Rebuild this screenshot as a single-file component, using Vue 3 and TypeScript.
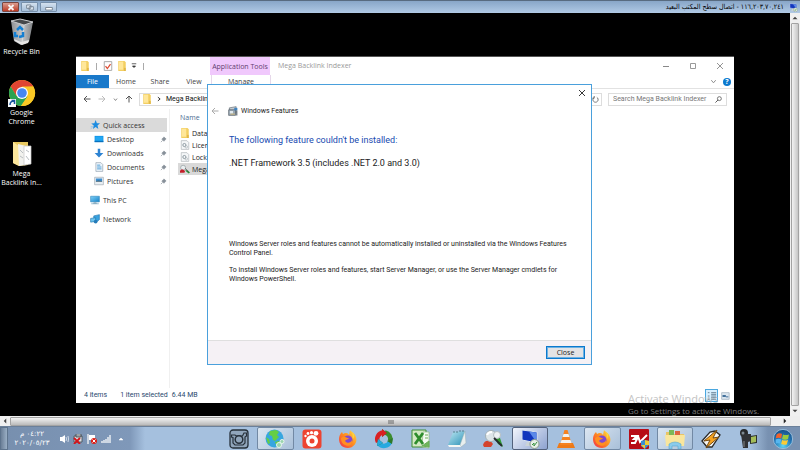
<script setup lang="ts">
interface NavItem { label: string; icon: string }

const places: NavItem[] = [
  { label: 'Desktop', icon: 'i-desktop' },
  { label: 'Downloads', icon: 'i-down' },
  { label: 'Documents', icon: 'i-doc' },
  { label: 'Pictures', icon: 'i-pic' },
]
const files: NavItem[] = [
  { label: 'Data', icon: 'i-folder' },
  { label: 'Licen', icon: 'i-config' },
  { label: 'Lock', icon: 'i-config' },
  { label: 'Mega', icon: 'i-app' },
]
const apps: { label: string; icon: string; state?: string }[] = [
  { label: 'Camera', icon: 't-camera' },
  { label: 'Downloader', icon: 't-globe', state: 'open' },
  { label: 'Player', icon: 't-gom' },
  { label: 'Firefox', icon: 't-firefox' },
  { label: 'Sync', icon: 't-swirl' },
  { label: 'Excel', icon: 't-excel' },
  { label: 'Notes', icon: 't-notes' },
  { label: 'Indexer', icon: 't-indexer' },
  { label: 'Remote Desktop', icon: 't-rdp', state: 'active' },
  { label: 'VLC', icon: 't-vlc' },
  { label: 'Firefox window', icon: 't-firefox', state: 'open' },
  { label: 'Video tool', icon: 't-ev' },
  { label: 'Explorer', icon: 't-explorer', state: 'open' },
  { label: 'Winamp', icon: 't-winamp' },
  { label: 'Camcorder', icon: 't-camcorder' },
]
</script>

<template>
  <svg class="sprite" aria-hidden="true">
    <defs>
      <linearGradient id="gBin" x1="0" x2="1"><stop offset="0" stop-color="#8d8f92" /><stop offset=".5" stop-color="#c4c7ca" /><stop offset="1" stop-color="#7b7e81" /></linearGradient>
      <linearGradient id="gScreen" x1="0" x2="1" y2="1"><stop offset="0" stop-color="#7fd0f7" /><stop offset="1" stop-color="#1482c8" /></linearGradient>
      <radialGradient id="gOrb" cx=".5" cy=".85" r=".9"><stop offset="0" stop-color="#5fd5f5" /><stop offset=".5" stop-color="#2275b5" /><stop offset="1" stop-color="#174a80" /></radialGradient>
      <linearGradient id="gFox" x1="1" x2="0" y2="1"><stop offset="0" stop-color="#ffe14a" /><stop offset=".5" stop-color="#ff8a1f" /><stop offset="1" stop-color="#f02a4e" /></linearGradient>
      <linearGradient id="gNote" x1="0" x2="1" y2="1"><stop offset="0" stop-color="#bfe9f3" /><stop offset="1" stop-color="#2f93b8" /></linearGradient>

      <symbol id="i-folder" viewBox="0 0 16 16"><path d="M2 0h10l2 2v14H2z" fill="#f3cf62" /><path d="M3 1h7v13H3z" fill="#ffe79a" /><path d="M11 11h3v5h-3z" fill="#e2b84b" /></symbol>
      <symbol id="i-star" viewBox="0 0 16 16"><path d="M9 0l2 5 5 .2-4 3.600 1.400 5.400-4.400-3-4.400 3L6 8.800 2 5.700 7 5z" fill="#1b8be0" /><path d="M1 11l4-1M1 14l3-2" stroke="#7abdf0" /></symbol>
      <symbol id="i-desktop" viewBox="0 0 16 16"><path d="M1 3h14v10H1z" fill="#0b8fe5" /><path d="M2 4h12v7H2z" fill="#22a7f2" /><path d="M1 11h14v2H1z" fill="#0870bd" /></symbol>
      <symbol id="i-down" viewBox="0 0 16 16"><path d="M6 1h4v7h5l-7 7-7-7h5z" fill="#2d83d2" /></symbol>
      <symbol id="i-doc" viewBox="0 0 16 16"><path d="M3 1h8l3 3v11H3z" fill="#eef5fb" stroke="#8b9aa8" /><path d="M5 5h5M5 8h7M5 11h7" stroke="#4a9bd4" stroke-width="1.500" /></symbol>
      <symbol id="i-pic" viewBox="0 0 16 16"><path d="M1 2h14v12H1z" fill="#e9eef2" stroke="#99a4ac" /><path d="M3 4h10v4H3z" fill="#3e8fd0" /><path d="M3 8l4-1 6 1v1H3z" fill="#345c74" /></symbol>
      <symbol id="i-pc" viewBox="0 0 16 16"><path d="M1 2h14v9H1z" fill="url(#gScreen)" stroke="#3388bd" /><path d="M6 11h4l1 3H5z" fill="#9bb9ca" /><path d="M2 14h12" stroke="#5a90ae" /></symbol>
      <symbol id="i-net" viewBox="0 0 16 16"><path d="M6 3l9-2v8l-5 4-4-2z" fill="#39a2df" stroke="#2277b0" /><path d="M1 7l8-1v6l-8 1z" fill="#6cc4ef" stroke="#1f73aa" /><circle cx="9" cy="12" r="3" fill="#267bb8" /></symbol>
      <symbol id="i-config" viewBox="0 0 16 16"><path d="M2 1h9l3 3v11H2z" fill="#f5f7f8" stroke="#a8afb4" /><circle cx="7" cy="8" r="2.500" fill="none" stroke="#8a969f" stroke-width="1.500" /><circle cx="10" cy="11" r="2" fill="none" stroke="#a2abb1" /></symbol>
      <symbol id="i-app" viewBox="0 0 16 16"><circle cx="5" cy="6" r="4" fill="#e9eef0" stroke="#8c9699" /><path d="M0 11c2-3 6-3 8 1l-1 2H0z" fill="#c4202a" /><path d="M9 9l7 4-2 2-5-4z" fill="#238a35" /><path d="M8 7l6 5" stroke="#333" /></symbol>
      <symbol id="i-pin" viewBox="0 0 16 16"><path d="M9 2l5 5-2 1-2 3-1 1-5-5 1-1 3-2zM6 10l-4 4" fill="#879099" stroke="#879099" stroke-width="1.500" /></symbol>
      <symbol id="i-check" viewBox="0 0 16 16"><path d="M2 1h12v14H2z" fill="#fff" stroke="#a4a4a4" stroke-width="1.500" /><path d="M4 8l3 4 5-7" fill="none" stroke="#dd4b32" stroke-width="2" /></symbol>
      <symbol id="i-feature" viewBox="0 0 16 16"><path d="M2 3l11-2v10l-9 2z" fill="#c3c9cf" stroke="#59636c" /><path d="M1 6h11v9H1z" fill="#9aa8b3" stroke="#4b5660" /><path d="M3 8h5v4H3z" fill="#dfe8ee" /><path d="M10 3h5v4h-5z" fill="#3f83bf" /><path d="M13 7h2v8h-2z" fill="#66717a" /><path d="M4 13h7" stroke="#e5b953" stroke-width="1" /></symbol>
      <symbol id="i-left" viewBox="0 0 16 16"><path d="M15 8H2M8 2L2 8l6 6" fill="none" stroke="currentColor" stroke-width="2" /></symbol>
      <symbol id="i-x" viewBox="0 0 16 16"><path d="M2 2l12 12M14 2L2 14" fill="none" stroke="currentColor" stroke-width="1.800" /></symbol>
      <symbol id="i-chev" viewBox="0 0 16 16"><path d="M3 5l5 6 5-6" fill="none" stroke="currentColor" stroke-width="2.200" /></symbol>

      <symbol id="t-camera" viewBox="0 0 20 20"><rect x="1" y="1" width="18" height="18" rx="3" fill="#90a5bb" stroke="#26303a" stroke-width="1.300" /><path d="M2.500 6H6l1.500 1h6L15 4h2.500v3l-1.500 1v6l-2 2H6l-2-2V8.500L2.500 8z" fill="none" stroke="#26303a" stroke-width="1.200" /><circle cx="10" cy="10.500" r="3.800" fill="#90a5bb" stroke="#26303a" stroke-width="1.500" /></symbol>
      <symbol id="t-globe" viewBox="0 0 20 20"><circle cx="9.500" cy="9.500" r="9" fill="#37a6df" /><path d="M5 2l6-1 3 2-2 3 2 2-4 4-2-1-1-4-3-1zM10 13l4-1 1 3-3 3zM1 8l3 2 1 4-2 1z" fill="#65ce45" /><circle cx="14" cy="16" r="2.500" fill="#9ad5ae" stroke="#e8f5ec" /><circle cx="17" cy="12.500" r="2" fill="#9ad5ae" stroke="#e8f5ec" /></symbol>
      <symbol id="t-gom" viewBox="0 0 20 20"><rect x=".5" y=".5" width="19" height="19" rx="3" fill="#ed4331" /><circle cx="10" cy="12" r="6" fill="#fff" /><circle cx="10" cy="12" r="2.500" fill="#ed4331" /><circle cx="3.500" cy="7" r="1.200" fill="#fff" /><circle cx="6" cy="4.500" r="1.400" fill="#fff" /><circle cx="9.500" cy="3.700" r="1.600" fill="#fff" /><circle cx="14" cy="4.300" r="2.400" fill="#fff" /></symbol>
      <symbol id="t-firefox" viewBox="0 0 20 20"><path d="M12 1c1 2 5 3 6 7 2 6-3 11-8 11C4 19 1 15 1 10c0-3 1-5 3-7l1 2 2-1c2 0 3 0 4 2z" fill="url(#gFox)" /><circle cx="10" cy="11" r="4.500" fill="#8148cf" /><path d="M3 9c4-3 5 0 8 0-1 2-3 1-4 3 2 3 6 2 7-1 1 5-4 7-7 5-3-1-4-4-4-7z" fill="#ff8f22" /><path d="M12 1c4 4 2 6 3 9 2-3 1-4 1-5z" fill="#ffd43c" /></symbol>
      <symbol id="t-swirl" viewBox="0 0 20 20"><g fill="none" stroke-width="4.500"><path d="M9 3.500A6.500 6.500 0 0 0 4 13" stroke="#d92022" /><path d="M11 3.500A6.500 6.500 0 0 1 16 12" stroke="#3c8c2d" /><path d="M5 14.500A6.500 6.500 0 0 0 16 13" stroke="#26a9e0" /></g><path d="M8 0l5 4-5 4zM18 15l-5-3 6-3zM3 17l1-7 5 4z" fill="#2c7a2a" /><path d="M8 0l5 4-5 4z" fill="#d92022" /><path d="M3 17l1-7 5 4z" fill="#26a9e0" /></symbol>
      <symbol id="t-excel" viewBox="0 0 20 20"><path d="M1 1h14v17H1z" fill="#d3e9c4" stroke="#3f8d35" /><path d="M12 3h6v16l-7-1z" fill="#f4faf1" stroke="#8eb883" stroke-width=".7" /><path d="M4 4l8 11M12 4L4 15" stroke="#2d8d2c" stroke-width="2.800" /><path d="M14 6h3M14 9h3M11 17l7-5v6z" stroke="#6aad58" stroke-width="1" fill="#6fb55a" /></symbol>
      <symbol id="t-notes" viewBox="0 0 20 20"><path d="M6 3l12-1-4 14H1z" fill="url(#gNote)" /><path d="M18 2l1 12-5 4-1-2z" fill="#e8eeee" stroke="#9aaeb3" stroke-width=".5" /><path d="M1 16h12l1 2H2z" fill="#f5f7f4" /><path d="M7 2v2M10 2v2M13 1v2M16 1v2" stroke="#567e8d" /></symbol>
      <symbol id="t-indexer" viewBox="0 0 20 20"><path d="M0 16c1-5 7-6 10-1l-2 3H1z" fill="#d4432d" /><path d="M11 7l6 2 3 9-5-3z" fill="#2f9b32" /><circle cx="8" cy="7" r="5.500" fill="#dde5e8" stroke="#a3b0b5" /><circle cx="14" cy="6" r="3.500" fill="#eef2f3" stroke="#b6bfc3" /><path d="M4 6c1-3 3-3 5-3" fill="none" stroke="#fff" stroke-width="2" /><path d="M11 9l8 8" stroke="#262b2c" stroke-width="1.800" /></symbol>
      <symbol id="t-rdp" viewBox="0 0 20 20"><path d="M2 1l15 2v11L2 11z" fill="#1236bd" stroke="#d9e3ef" /><path d="M9 2.500l7.500 1v10z" fill="#5a88e8" /><path d="M7 13h5l1 4H5z" fill="#cbd3d8" /><circle cx="14.500" cy="15" r="4.500" fill="#e8efe8" stroke="#8a9a8c" /><path d="M12 16l2-2v3l3-4" stroke="#3c9444" fill="none" /></symbol>
      <symbol id="t-vlc" viewBox="0 0 20 20"><path d="M3 14h14l2 5H1z" fill="#ee7a17" /><path d="M8.500 1h3L16 16H4z" fill="#f58220" /><path d="M7.500 5h5l1 3h-7zM5.500 11h9l1 3h-11z" fill="#f2f2f0" /></symbol>
      <symbol id="t-ev" viewBox="0 0 20 20"><rect width="20" height="20" rx="1" fill="#b70c17" /><path d="M2 7h6l-3 3h3l-2 4H2M9 7l2 6 7-7" fill="none" stroke="#fff" stroke-width="2" /><path d="M12 12l4-1 4 1v4l-4 4-4-3z" fill="#3b8fd1" /><path d="M16 11l4 1v4h-4zM12 16h4v4z" fill="#f1cb36" /></symbol>
      <symbol id="t-explorer" viewBox="0 0 20 20"><path d="M1 3h7l1 2h10v12H1z" fill="#e8c467" /><path d="M4 1h5v7H4z" fill="#7bb857" /><path d="M10 2h5v7h-5z" fill="#dc6540" /><path d="M0 6h20l-1 11H1z" fill="#f9e69d" /><path d="M4 20v-5q6-4 12 0v5h-3v-3H7v3z" fill="#8bcbec" stroke="#4a9fcb" stroke-width=".5" /></symbol>
      <symbol id="t-winamp" viewBox="0 0 20 20"><path d="M1 12L9 3l5-1 5 4-8 12H6z" fill="#f6f6f4" stroke="#292929" stroke-width="1.300" /><path d="M16 1L3 12l6-1-4 8L18 8l-6 1z" fill="#f7a421" stroke="#744a13" /></symbol>
      <symbol id="t-camcorder" viewBox="0 0 20 20"><circle cx="6" cy="4" r="4" fill="#282a2c" /><path d="M3 5h10v7l-3 1v6H5l-1-7z" fill="#303235" /><path d="M12 7l7-1v8l-7 1z" fill="#2c302c" /><path d="M13 8l5-1v6l-5 1z" fill="#a4bd59" /><circle cx="5" cy="4" r="1.500" fill="#7d8992" /><path d="M6 12v6" stroke="#85898c" /></symbol>
    </defs>
  </svg>

  <div class="screen">
    <header class="session">
      <div class="session-buttons">
        <button class="sbtn red" aria-label="Close session"><svg viewBox="0 0 12 8"><path d="M3 1l6 6M9 1L3 7" stroke="#f8f4f3" stroke-width="2.200" /></svg></button>
        <button class="sbtn" aria-label="Restore session"><svg viewBox="0 0 12 8"><path d="M2 1h5v4H2zM5 3h5v4H5z" fill="#e7eff8" stroke="#6e7a88" /></svg></button>
        <button class="sbtn" aria-label="Minimize session"><svg viewBox="0 0 12 8"><path d="M2 4h8v3H2z" fill="#fff" stroke="#6e7a88" /></svg></button>
      </div>
      <h1 class="session-title" dir="rtl">١١٦,٢٠٣,٧٠,٢٤١ - اتصال سطح المكتب البعيد</h1>
      <svg class="session-icon"><use href="#t-rdp" /></svg>
    </header>

    <div class="viewport">
      <main class="desktop">
        <div class="shortcuts">
          <a class="shortcut" href="#bin">
            <svg viewBox="0 0 28 28"><path d="M3 3l9-2 13 3-4 20-8 3-7-4z" fill="url(#gBin)" /><path d="M3 3l9-2 13 3-9 3z" fill="#45484a" stroke="#c7c9cb" /><path d="M16 7l-2 19" stroke="#e0e2e2" stroke-width=".7" /><path d="M6 21l7 3 8-2-1 3-6 2-7-4z" fill="#e6e6e6" /><path d="M9 12l3-3 3 3M7 14v4h3M15 14v4l-4 1" fill="none" stroke="#147fd2" stroke-width="2.500" /></svg>
            <span>Recycle Bin</span>
          </a>
          <a class="shortcut" href="#chrome">
            <svg viewBox="0 0 28 28"><circle cx="14" cy="14" r="13" fill="#f9c825" /><path d="M2.700 7.500A13 13 0 0 1 25.300 7.500H14L8.400 17z" fill="#df4532" /><path d="M2.700 7.500A13 13 0 0 0 13 27l6.500-9.500-11-.5z" fill="#2ba252" /><path d="M25.300 7.500A13 13 0 0 1 13 27l6.500-9.500L19 8z" fill="#f9c825" /><circle cx="14" cy="14" r="6" fill="#fff" /><circle cx="14" cy="14" r="4.800" fill="#4587f2" /><path d="M0 20h8v8H0z" fill="#f7fafc" /><path d="M2 26c0-3 1-4 4-4M3.500 21.500H6.500V25" fill="none" stroke="#17559e" stroke-width="1.500" /></svg>
            <span>Google<br />Chrome</span>
          </a>
          <a class="shortcut" href="#mega">
            <svg viewBox="0 0 28 28"><path d="M5 2h15v23l-9 1-6-3z" fill="#e9c960" /><path d="M5 2l6 4v20l-6-3z" fill="#fbe69c" /><path d="M10 4l8 2v19l-7 1z" fill="#f2f2ee" /><path d="M16 6h7v18l-7 1z" fill="#fff" stroke="#c6c6c6" stroke-width=".7" /><path d="M12 10l3 3M12 16l3 2M18 10l3 2M18 16l3 4" stroke="#b9bec1" /></svg>
            <span>Mega<br />Backlink In...</span>
          </a>
        </div>

        <section class="explorer">
          <div class="caption">
            <div class="quick">
              <svg><use href="#i-folder" /></svg><i></i><svg><use href="#i-check" /></svg><svg><use href="#i-folder" /></svg>
              <svg class="small" viewBox="0 0 8 8"><path d="M1 1h6M2 4h4L4 6z" stroke="#333" fill="#333" /></svg><i></i>
            </div>
            <div class="tool-tab">Application Tools</div>
            <h2>Mega Backlink Indexer</h2>
            <div class="window-buttons">
              <button aria-label="Minimize"><svg viewBox="0 0 8 8"><path d="M1 4.500h6" stroke="#888" /></svg></button>
              <button aria-label="Maximize"><svg viewBox="0 0 8 8"><path d="M1.500 1.500h5v5h-5z" fill="none" stroke="#999" /></svg></button>
              <button aria-label="Close window"><svg><use href="#i-x" /></svg></button>
            </div>
          </div>
          <nav class="ribbon">
            <button class="file">File</button><button>Home</button><button>Share</button><button>View</button><button class="manage">Manage</button>
            <div class="ribbon-end"><svg><use href="#i-chev" /></svg><button class="help" aria-label="Help">?</button></div>
          </nav>
          <div class="address">
            <div class="arrows">
              <svg><use href="#i-left" /></svg><svg class="pale flip"><use href="#i-left" /></svg><svg class="small"><use href="#i-chev" /></svg><svg class="up"><use href="#i-left" /></svg>
            </div>
            <div class="path"><svg><use href="#i-folder" /></svg><svg class="small crumb"><use href="#i-chev" /></svg><span>Mega Backlink</span><svg class="refresh" viewBox="0 0 16 16"><path d="M11 3a6 6 0 1 1-6 0M5 0v5H1" fill="none" stroke="#666" stroke-width="2" /></svg></div>
            <div class="search"><input type="text" aria-label="Search" placeholder="Search Mega Backlink Indexer" /><svg viewBox="0 0 16 16"><circle cx="10" cy="6" r="4.500" fill="none" stroke="#555" stroke-width="1.800" /><path d="M7 9l-6 6" stroke="#555" stroke-width="2.200" /></svg></div>
          </div>
          <div class="content">
            <nav class="tree">
              <a class="root selected" href="#quick"><svg><use href="#i-star" /></svg>Quick access</a>
              <a v-for="p in places" :key="p.label" class="leaf" :href="'#' + p.label"><svg><use :href="'#' + p.icon" /></svg><span>{{ p.label }}</span><svg class="pin"><use href="#i-pin" /></svg></a>
              <a class="root spaced" href="#pc"><svg><use href="#i-pc" /></svg>This PC</a>
              <a class="root spaced" href="#net"><svg><use href="#i-net" /></svg>Network</a>
            </nav>
            <table class="files">
              <thead><tr><th>Name</th></tr></thead>
              <tbody><tr v-for="f in files" :key="f.label" :class="{ picked: f.icon === 'i-app' }"><td><svg><use :href="'#' + f.icon" /></svg>{{ f.label }}</td></tr></tbody>
            </table>
          </div>
          <footer class="status"><span>4 items</span><span class="sel">1 item selected</span><span class="size">6.44 MB</span>
            <div class="views">
              <button class="on" aria-label="Details view"><svg viewBox="0 0 12 12"><path d="M1 2h2M1 6h2M1 10h2M5 2h6M5 4h6M5 6h6M5 8h6M5 10h6" stroke="#597184" /></svg></button>
              <button aria-label="Large icons view"><svg viewBox="0 0 12 12"><path d="M2 2h9v8H2z" fill="#dbe6ef" stroke="#a7b6c3" /><path d="M3 5h4v2H3z" fill="#24598a" /><path d="M7 7h3" stroke="#24598a" /></svg></button>
            </div>
          </footer>
        </section>

        <section class="dialog" role="dialog" aria-labelledby="dlg">
          <button class="dialog-x" aria-label="Close dialog"><svg><use href="#i-x" /></svg></button>
          <div class="dialog-head"><svg class="back"><use href="#i-left" /></svg><svg class="feature"><use href="#i-feature" /></svg><span id="dlg">Windows Features</span></div>
          <div class="dialog-body">
            <h3>The following feature couldn't be installed:</h3>
            <p class="name">.NET Framework 3.5 (includes .NET 2.0 and 3.0)</p>
            <div class="notes">
              <p>Windows Server roles and features cannot be automatically installed or uninstalled via the Windows Features<br />Control Panel.</p>
              <p>To install Windows Server roles and features, start Server Manager, or use the Server Manager cmdlets for<br />Windows PowerShell.</p>
            </div>
          </div>
          <footer class="dialog-foot"><button>Close</button></footer>
        </section>

        <div class="watermark"><strong>Activate Windows</strong><span>Go to Settings to activate Windows.</span></div>
      </main>
      <div class="vbar"><svg viewBox="0 0 8 8"><path d="M4 3l2 2H2z" fill="#444" /></svg><div class="thumb"></div><svg viewBox="0 0 8 8"><path d="M4 5l2-2H2z" fill="#444" /></svg></div>
      <div class="hbar"><svg viewBox="0 0 8 8"><path d="M3 4l2-2v4z" fill="#444" /></svg><div class="thumb"><svg viewBox="0 0 8 8"><path d="M2 2v4M4 2v4M6 2v4" stroke="#666" /></svg></div><svg viewBox="0 0 8 8"><path d="M5 4L3 2v4z" fill="#222" /></svg></div>
      <div class="corner"></div>
    </div>

    <footer class="taskbar">
      <button class="peek" aria-label="Show desktop"></button>
      <div class="clock" dir="rtl"><span>٠٤:٢٢ م</span><span>٢٠٢٠/٠٥/٢٣</span></div>
      <div class="tray">
        <svg viewBox="0 0 10 10"><path d="M1 3h2l3-2v8L3 7H1z" fill="#fff" /><path d="M7 3q1 2 0 4M9 2q1 3 0 6" fill="none" stroke="#e8eef5" stroke-width=".8" /></svg>
        <svg viewBox="0 0 10 10"><path d="M1 2h8v6H1zM3 0h5v3H3z" fill="#d9dde1" stroke="#43494f" stroke-width=".8" /><path d="M1 4l6 6M7 4l-6 6" stroke="#d4141b" stroke-width="1.800" /></svg>
        <svg viewBox="0 0 10 10"><path d="M1 0v10" stroke="#f6f6f6" stroke-width="1.300" /><path d="M2 1h6v5H2z" fill="#fff" /><circle cx="7" cy="7" r="3" fill="#dc2018" /><path d="M5.500 5.500l3 3M8.500 5.500l-3 3" stroke="#fff" /></svg>
        <svg viewBox="0 0 10 10"><path d="M1 9V7M3 9V6M5 9V5M7 9V3M9 9V1" stroke="#e8edf2" stroke-width="1.500" /></svg>
        <svg class="more" viewBox="0 0 10 10"><path d="M5 4l2 2H3z" fill="#fff" stroke="#fff" stroke-width=".5" /></svg>
      </div>
      <nav class="apps"><button v-for="a in apps" :key="a.label" :class="a.state" :aria-label="a.label"><svg><use :href="'#' + a.icon" /></svg></button></nav>
      <button class="start" aria-label="Start"><svg viewBox="0 0 24 24"><circle cx="12" cy="12" r="10.500" fill="url(#gOrb)" stroke="#9ac1dd" /><path d="M5 7q3-2 6-.5l-1 5Q7 10 4 11.500z" fill="#f1622c" /><path d="M12 7q3 1.500 6.500 0l-1 5q-3 1.500-6.500 0z" fill="#9cca3c" /><path d="M4 12.500q3-1.500 6 0l-1 4.500q-3-1-5 0z" fill="#57b6ef" /><path d="M11 13q3 1.500 6.500 0l-1.500 5q-3 1-6-.5z" fill="#fccb35" /></svg></button>
    </footer>
  </div>
</template>

<style>
html, body { margin: 0; background: #000; }
</style>

<style scoped>
* { box-sizing: border-box; }
button { margin: 0; padding: 0; border: 0; background: none; font: inherit; color: inherit; }
h1, h2, h3, p { margin: 0; font-size: inherit; font-weight: 400; }
a { color: inherit; text-decoration: none; }
svg { display: block; width: 10px; height: 10px; flex: none; }
.sprite { position: absolute; width: 0; height: 0; }
.screen { height: 100vh; display: flex; flex-direction: column; overflow: hidden; font-family: "Open Sans", "Noto Sans", sans-serif; font-size: 7px; line-height: 9px; color: #222; white-space: nowrap; }

.session { flex: none; height: 13px; display: flex; align-items: center; gap: 5px; padding: 0 2px; border-top: 1px solid #586b80; background: linear-gradient(#88a6c8, #b1cae5); }
.session-buttons { display: flex; gap: 2px; flex: 1; }
.sbtn { width: 17px; height: 10px; display: grid; place-items: center; border: 1px solid #7790ab; border-radius: 1px; background: linear-gradient(#d4e1ef, #a6bfd9); }
.sbtn svg { width: 10px; height: 7px; }
.sbtn.red { background: linear-gradient(#dc9d90, #bd3b26); border-color: #7b4741; }
.session-title { font-family: "DejaVu Sans Condensed", "DejaVu Sans", sans-serif; font-size: 7px; color: #000; }
.session-icon { width: 9px; height: 9px; }

.viewport { flex: 1; min-height: 0; display: grid; grid-template: 1fr 10px / 1fr 10px; background: #eee; }
.desktop { position: relative; background: #000; overflow: hidden; }
.shortcuts { width: 43px; display: grid; grid-auto-rows: 61px; padding-top: 5px; color: #fff; }
.shortcut { display: flex; flex-direction: column; align-items: center; gap: 1px; text-align: center; }
.shortcut svg { width: 28px; height: 28px; }

.explorer { position: absolute; left: 76px; top: 43px; right: 56px; bottom: 13px; display: flex; flex-direction: column; background: #fff; border-top: 1px solid #555; }
.caption { height: 18px; display: flex; align-items: stretch; }
.quick { width: 134px; display: flex; align-items: center; gap: 4px; padding-left: 4px; }
.quick i { width: 1px; height: 7px; background: #aaa; margin: 0 2px; }
.small { width: 6px; height: 6px; }
.tool-tab { width: 60px; display: grid; place-items: center; background: #f0c8fc; color: #634070; }
.caption h2 { padding: 4px 8px; color: #999; }
.window-buttons { margin-left: auto; display: flex; align-items: center; gap: 19px; padding-right: 10px; color: #888; }
.window-buttons svg { width: 8px; height: 8px; }
.ribbon { height: 14px; display: flex; border-bottom: 1px solid #e2e2e2; }
.ribbon > button { width: 34px; color: #444; }
.ribbon .file { width: 33px; background: #1979ca; color: #fff; }
.ribbon .manage { width: 60px; border: solid #e6d8ea; border-width: 0 1px; }
.ribbon-end { margin-left: auto; display: flex; align-items: center; gap: 6px; padding-right: 3px; color: #888; }
.ribbon-end svg { width: 7px; height: 7px; }
.help { width: 8px; height: 8px; border-radius: 50%; background: #0b79ce; color: #fff; font-weight: 700; line-height: 8px; }
.address { height: 20px; display: flex; align-items: center; gap: 6px; padding: 0 7px; }
.arrows { display: flex; align-items: center; gap: 7px; width: 50px; color: #555; }
.arrows svg { width: 8px; height: 8px; }
.arrows .small { width: 5px; height: 5px; }
.arrows .pale { color: #bbb; }
.flip { transform: rotate(180deg); }
.up { transform: rotate(90deg); }
.path { flex: 1; height: 13px; display: flex; align-items: center; gap: 4px; padding: 0 2px; border: 1px solid #ddd; color: #111; font-family: Roboto, sans-serif; }
.crumb { transform: rotate(-90deg); }
.refresh { width: 7px; height: 7px; margin-left: auto; }
.search { width: 119px; height: 13px; display: flex; align-items: center; border: 1px solid #ddd; padding: 0 4px; font-family: Roboto, sans-serif; }
.search input { flex: 1; min-width: 0; padding: 0; border: 0; outline: 0; background: none; font: inherit; }
.search input::placeholder { color: #777; opacity: 1; }
.search svg { width: 7px; height: 7px; }

.content { flex: 1; display: flex; min-height: 0; }
.tree { width: 94px; padding-top: 9px; border-right: 1px solid #f0f0f0; color: #333; }
.tree a { display: flex; align-items: center; height: 14px; gap: 3px; }
.root { padding-left: 14px; }
.root.selected { background: #dadada; margin-right: 2px; }
.leaf { padding: 0 2px 0 18px; }
.leaf span { flex: 1; }
.tree .pin { width: 7px; height: 7px; }
.tree .spaced { margin-top: 5px; }
.files { width: 50%; align-self: flex-start; margin-left: 8px; border-collapse: collapse; text-align: left; }
.files th { height: 18px; padding: 0 0 2px 2px; font-weight: 400; color: #4a6c91; }
.files td { height: 12px; padding: 0 2px; display: flex; align-items: center; gap: 2px; }
.picked { background: #d9d9d9; }
.status { height: 15px; display: flex; align-items: center; padding: 0 3px 0 8px; color: #28486d; font-family: Roboto, sans-serif; }
.sel { margin-left: 13px; }
.size { margin-left: 4px; }
.views { margin-left: auto; display: flex; align-items: center; }
.views button { width: 13px; height: 13px; display: grid; place-items: center; }
.views .on { background: #d8effd; border: 1px solid #4aa7df; }

.dialog { position: absolute; left: 207px; top: 71px; right: 198px; bottom: 51px; display: flex; flex-direction: column; background: #fff; border: 1px solid #4aa0dc; }
.dialog-x { position: absolute; top: 4px; right: 5px; color: #222; }
.dialog-x svg { width: 8px; height: 8px; }
.dialog-head { display: flex; align-items: center; padding: 21px 0 0 3px; font-family: Roboto, sans-serif; }
.dialog-head .back { width: 8px; height: 8px; color: #aaa; margin-right: 9px; }
.dialog-head .feature { margin-right: 3px; }
.dialog-body { flex: 1; padding: 18px 21px 0; font-family: Roboto, sans-serif; }
.dialog-body h3 { font-size: 9px; line-height: 12px; color: #174ab0; }
.name { margin-top: 12px; font-size: 9px; line-height: 10px; }
.notes { margin-top: 72px; display: grid; gap: 8px; }
.dialog-foot { height: 24px; flex: none; display: flex; justify-content: flex-end; align-items: center; padding-right: 6px; background: #f5f1f5; border-top: 1px solid #dfdfdf; }
.dialog-foot button { width: 39px; height: 13px; border: 1px solid #0b79cd; outline: 1px solid #6cb1e3; outline-offset: -2px; background: #e3e3e5; line-height: 9px; }
.watermark { position: absolute; left: 628px; bottom: 0; display: grid; color: #aaa; opacity: .7; }
.watermark strong { font-size: 11px; line-height: 12px; font-weight: 400; }
.watermark span { font-size: 8px; line-height: 11px; }

.vbar, .hbar { display: flex; align-items: center; background: #f0f0f0; }
.vbar { flex-direction: column; }
.vbar > svg, .hbar > svg { width: 10px; height: 10px; }
.thumb { flex: 1; display: grid; place-items: center; border: 1px solid #a3a3a3; border-radius: 1px; background: linear-gradient(90deg, #f3f3f3, #c6c6c6); }
.vbar .thumb { width: 8px; }
.hbar .thumb { height: 9px; background: linear-gradient(#f2f2f2, #bababa); margin-right: 9px; }
.hbar .thumb svg { width: 8px; height: 8px; }

.taskbar { flex: none; height: 24px; display: flex; align-items: stretch; border-top: 1px solid #6b809a; background: linear-gradient(90deg, #778fae, #7f98b9 130px, #a5c0de 145px, #a5c0de 750px, #7891b1 768px); }
.peek { width: 8px; border: 1px solid #5e748d; background: linear-gradient(90deg, #6b7f97, #9aafc5); }
.clock { width: 48px; display: flex; flex-direction: column; justify-content: center; align-items: center; font-family: "DejaVu Sans", sans-serif; color: #fff; }
.tray { width: 165px; display: flex; align-items: center; gap: 4px; padding-left: 3px; }
.more { margin-left: 1px; }
.apps { flex: 1; display: grid; grid-template-columns: repeat(15, 1fr); }
.apps button { display: grid; place-items: center; border: 1px solid transparent; border-radius: 2px; }
.apps svg { width: 20px; height: 20px; }
.apps .open { border-color: #7289a4; background: linear-gradient(135deg, #dbe6f1, #a9c0d9); }
.apps .active { border-color: #53627c; background: linear-gradient(135deg, #f1f5fc, #8da2d0); }
.start { width: 34px; display: grid; place-items: center; }
.start svg { width: 22px; height: 22px; }
</style>
